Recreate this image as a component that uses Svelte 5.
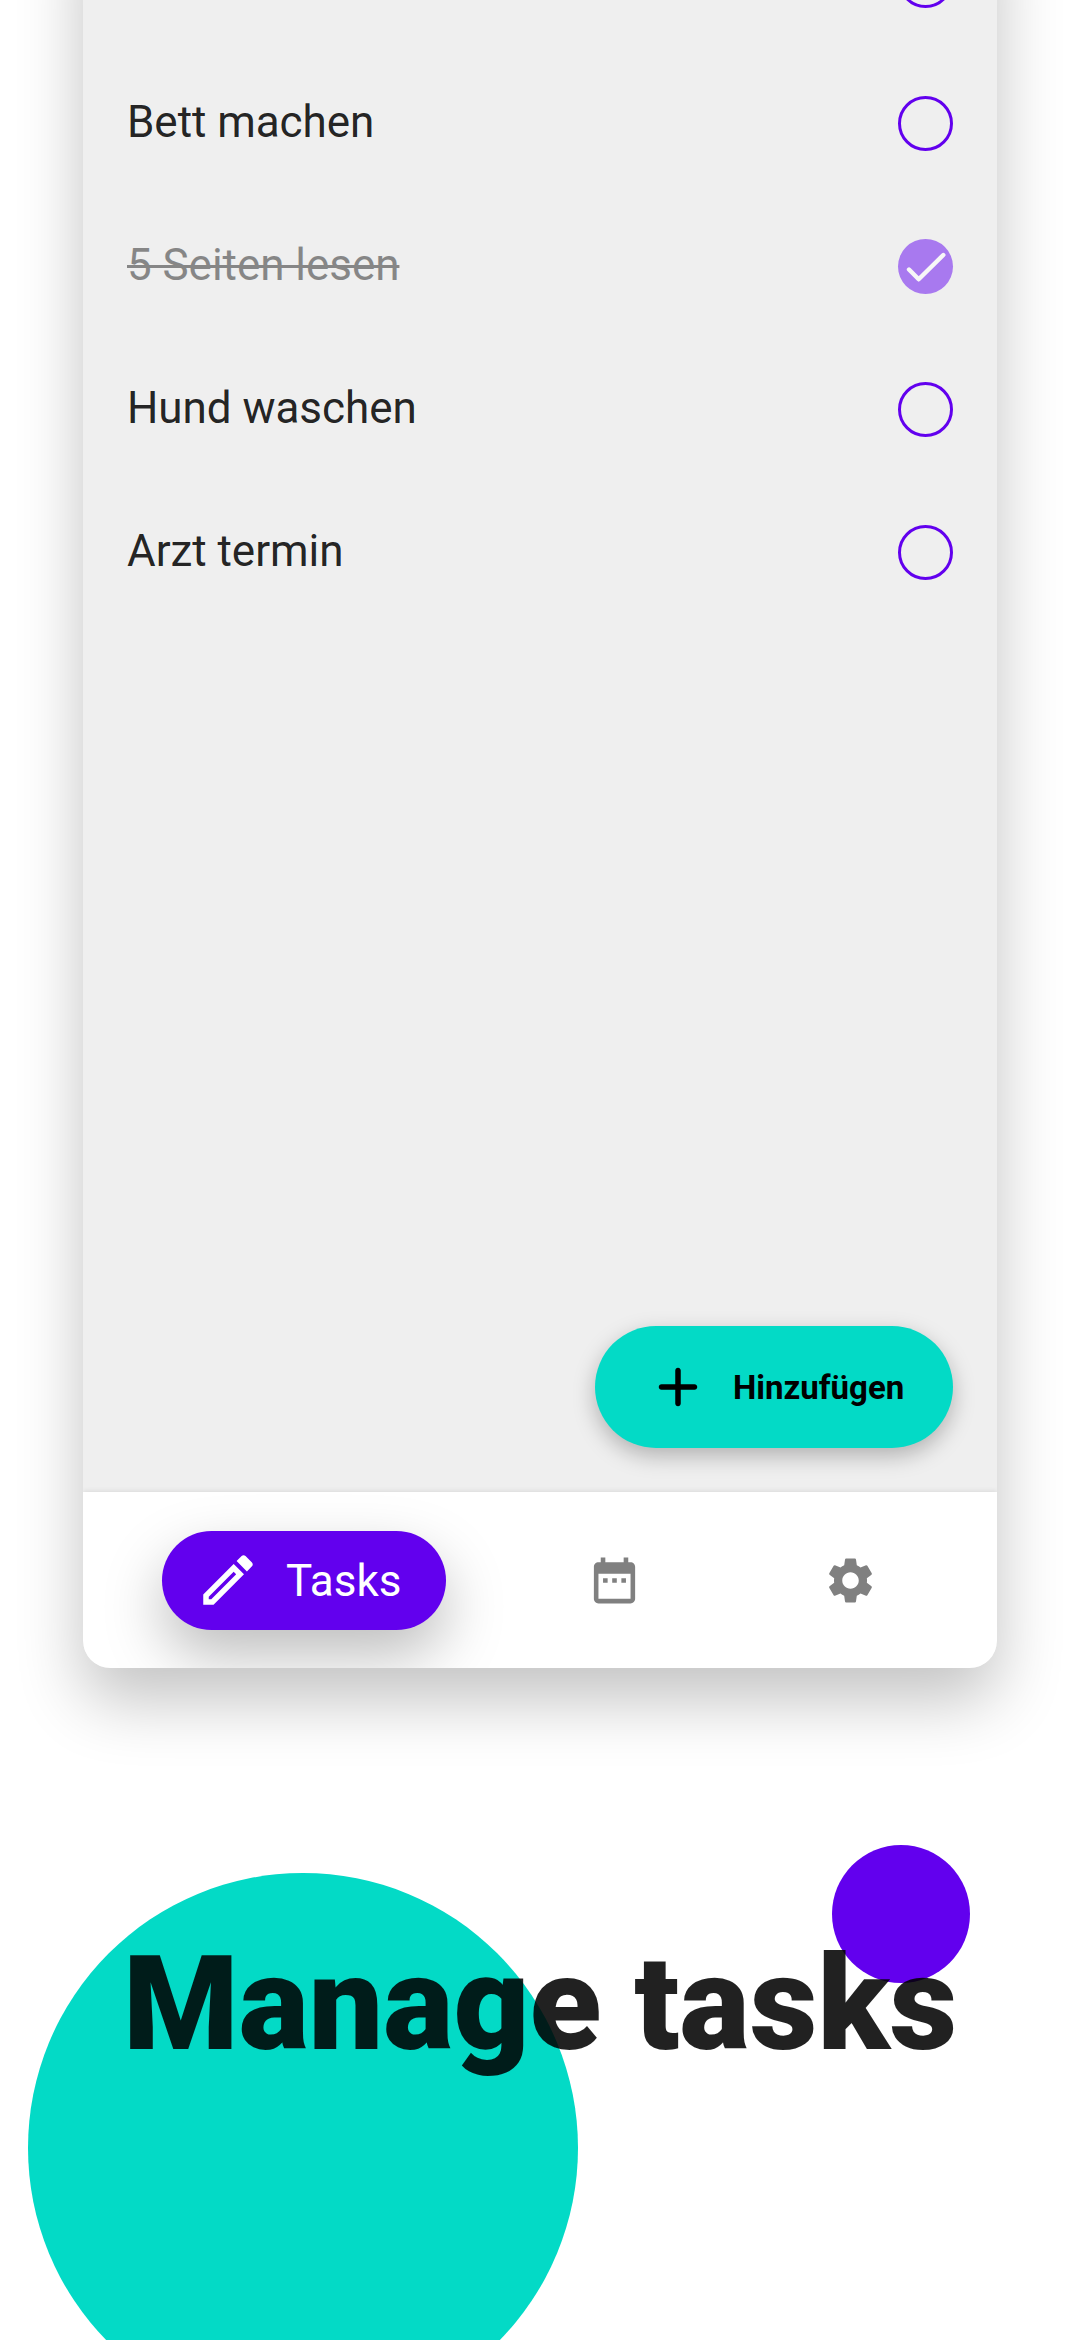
<script>
  const tasks = [
    { title: '', done: false },
    { title: 'Bett machen', done: false },
    { title: '5 Seiten lesen', done: true },
    { title: 'Hund waschen', done: false },
    { title: 'Arzt termin', done: false }
  ];
</script>

<div class="page">
  <main class="card">
    <ul class="list">
      {#each tasks as task}
        <li class="row" class:done={task.done}>
          <span class="title">{task.title}</span>
          <span class="check">
            {#if task.done}
              <svg viewBox="0 0 55 55"><path d="M11 30.5 20.7 40.3 45.3 16" /></svg>
            {/if}
          </span>
        </li>
      {/each}
    </ul>

    <button class="fab">
      <svg viewBox="0 0 24 24"><path d="M18 13h-5v5c0 .55-.45 1-1 1s-1-.45-1-1v-5H6c-.55 0-1-.45-1-1s.45-1 1-1h5V6c0-.55.45-1 1-1s1 .45 1 1v5h5c.55 0 1 .45 1 1s-.45 1-1 1z" /></svg>
      <span>Hinzufügen</span>
    </button>

    <nav class="nav">
      <div class="pill">
        <svg viewBox="0 0 24 24"><path d="M14.06 9.02l.92.92L5.92 19H5v-.92l9.06-9.06M17.66 3c-.25 0-.51.1-.7.29l-1.83 1.83 3.75 3.75 1.83-1.83c.39-.39.39-1.02 0-1.41l-2.34-2.34c-.2-.2-.45-.29-.71-.29zm-3.6 3.19L3 17.25V21h3.75L17.81 9.94l-3.75-3.75z" /></svg>
        <span>Tasks</span>
      </div>
      <div class="tab">
        <svg viewBox="0 0 24 24"><path d="M9 11H7v2h2v-2zm4 0h-2v2h2v-2zm4 0h-2v2h2v-2zm2-7h-1V2h-2v2H8V2H6v2H5c-1.11 0-1.99.9-1.99 2L3 20c0 1.1.89 2 2 2h14c1.1 0 2-.9 2-2V6c0-1.1-.9-2-2-2zm0 16H5V9h14v11z" /></svg>
      </div>
      <div class="tab">
        <svg viewBox="0 0 24 24"><path d="M19.14 12.94c.04-.3.06-.61.06-.94 0-.32-.02-.64-.07-.94l2.03-1.58c.18-.14.23-.41.12-.61l-1.92-3.32c-.12-.22-.37-.29-.59-.22l-2.39.96c-.5-.38-1.03-.7-1.62-.94l-.36-2.54c-.04-.24-.24-.41-.48-.41h-3.84c-.24 0-.43.17-.47.41l-.36 2.54c-.59.24-1.13.57-1.62.94l-2.39-.96c-.22-.08-.47 0-.59.22L2.74 8.87c-.12.21-.08.47.12.61l2.03 1.58c-.05.3-.09.63-.09.94s.02.64.07.94l-2.03 1.58c-.18.14-.23.41-.12.61l1.92 3.32c.12.22.37.29.59.22l2.39-.96c.5.38 1.03.7 1.62.94l.36 2.54c.05.24.24.41.48.41h3.84c.24 0 .44-.17.47-.41l.36-2.54c.59-.24 1.13-.56 1.62-.94l2.39.96c.22.08.47 0 .59-.22l1.92-3.32c.12-.22.07-.47-.12-.61l-2.01-1.58zM12 15.6c-1.98 0-3.6-1.62-3.6-3.6s1.62-3.6 3.6-3.6 3.6 1.62 3.6 3.6-1.62 3.6-3.6 3.6z" /></svg>
      </div>
    </nav>
  </main>

  <section class="hero">
    <span class="blob teal"></span>
    <span class="blob violet"></span>
    <h1>Manage tasks</h1>
  </section>
</div>

<style>
  :global(body) {
    margin: 0;
    background: #fff;
  }
  .page {
    width: 1080px;
    height: 2340px;
    overflow: hidden;
    background: #fff;
    font-family: Roboto, sans-serif;
    color: rgba(0, 0, 0, 0.87);
  }
  .card {
    position: relative;
    z-index: 1;
    display: flex;
    flex-direction: column;
    box-sizing: border-box;
    width: 914px;
    height: 1768px;
    margin: -100px auto 0;
    padding-top: 9px;
    border-radius: 27.5px;
    overflow: hidden;
    background: #efefef;
    box-shadow: 0 32px 66px rgba(0, 0, 0, 0.24);
  }
  .list {
    flex: 1;
    margin: 0;
    padding: 0 44px;
    list-style: none;
  }
  .row {
    display: flex;
    align-items: center;
    justify-content: space-between;
    height: 143px;
  }
  .title {
    margin-top: -3px;
    font-size: 44px;
    line-height: 52px;
    letter-spacing: -0.05px;
  }
  .check {
    box-sizing: border-box;
    width: 55px;
    height: 55px;
    border: 3px solid #6200ee;
    border-radius: 50%;
  }
  .done .title {
    color: #1f1f1f;
    opacity: 0.5;
    text-decoration: line-through;
    text-decoration-thickness: 2.5px;
  }
  .done .check {
    border: 0;
    background: #a879ef;
  }
  .check svg {
    display: block;
    fill: none;
    stroke: #f7f7f7;
    stroke-width: 4.4;
    stroke-linecap: round;
    stroke-linejoin: round;
  }
  .fab {
    display: flex;
    align-items: center;
    align-self: flex-end;
    gap: 22px;
    box-sizing: border-box;
    width: 358px;
    height: 122px;
    margin: 0 44px 44px;
    padding: 0 0 0 50px;
    border: 0;
    border-radius: 61px;
    background: #03dac6;
    box-shadow: 0 8px 22px rgba(0, 0, 0, 0.26);
    color: #000;
    font: 700 33px/40px Roboto, sans-serif;
  }
  .fab span,
  .pill span {
    padding-top: 1px;
  }
  .fab svg,
  .pill svg {
    width: 66px;
    height: 66px;
    fill: currentColor;
  }
  .nav {
    display: grid;
    grid-template-columns: 284px 50px 236px 236px;
    align-items: center;
    box-sizing: border-box;
    height: 176px;
    padding-left: 79px;
    background: #fff;
    box-shadow: 0 -1px 5px rgba(0, 0, 0, 0.09);
    overflow: hidden;
  }
  .pill {
    display: flex;
    align-items: center;
    gap: 25px;
    box-sizing: border-box;
    height: 99px;
    padding-left: 33px;
    border-radius: 50px;
    background: #6200ee;
    box-shadow: 0 26px 60px rgba(0, 0, 0, 0.26);
    color: #fff;
    font-size: 44px;
    line-height: 52px;
  }
  .tab {
    display: flex;
    justify-content: center;
  }
  .pill + .tab {
    grid-column: 3;
  }
  .tab svg {
    width: 55px;
    height: 55px;
    fill: #808080;
  }
  .hero {
    position: relative;
    box-sizing: border-box;
    height: 672px;
    padding: 259px 0 0 123px;
    overflow: hidden;
  }
  .blob {
    position: absolute;
    border-radius: 50%;
  }
  .teal {
    left: 28px;
    top: 204.5px;
    width: 550px;
    height: 550px;
    background: #03dac6;
  }
  .violet {
    left: 832px;
    top: 177px;
    width: 138px;
    height: 138px;
    background: #6200ee;
  }
  h1 {
    position: relative;
    margin: 0;
    font-size: 132px;
    font-weight: 900;
    line-height: 155px;
    white-space: nowrap;
  }
</style>
